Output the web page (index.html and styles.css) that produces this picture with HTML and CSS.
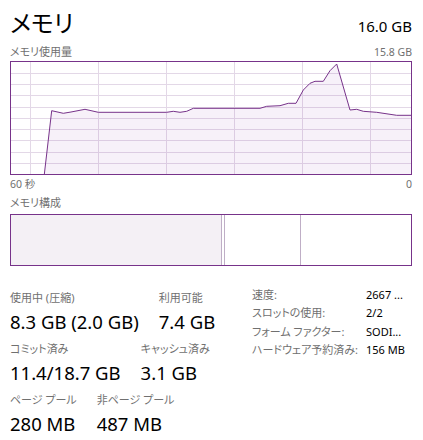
FILE: index.html
```html
<!DOCTYPE html>
<html lang="ja">
<head>
<meta charset="utf-8">
<link rel="stylesheet" href="styles.css">
</head>
<body>
<div class="page">
  <div class="header">
    <div class="title">メモリ</div>
    <div class="total">16.0 GB</div>
  </div>
  <div class="label-row">
    <span class="jp">メモリ使用量</span>
    <span class="small">15.8 GB</span>
  </div>
  <div class="graph">
    <svg width="400" height="112" viewBox="0 0 400 112">
      <g class="grid">
        <line x1="0" y1="11.5" x2="400" y2="11.5"/>
        <line x1="0" y1="22.5" x2="400" y2="22.5"/>
        <line x1="0" y1="33.5" x2="400" y2="33.5"/>
        <line x1="0" y1="45.5" x2="400" y2="45.5"/>
        <line x1="0" y1="56.5" x2="400" y2="56.5"/>
        <line x1="0" y1="67.5" x2="400" y2="67.5"/>
        <line x1="0" y1="78.5" x2="400" y2="78.5"/>
        <line x1="0" y1="90.5" x2="400" y2="90.5"/>
        <line x1="0" y1="101.5" x2="400" y2="101.5"/>
        <line x1="19.5" y1="0" x2="19.5" y2="112"/>
        <line x1="87.5" y1="0" x2="87.5" y2="112"/>
        <line x1="155.5" y1="0" x2="155.5" y2="112"/>
        <line x1="223.5" y1="0" x2="223.5" y2="112"/>
        <line x1="291.5" y1="0" x2="291.5" y2="112"/>
        <line x1="359.5" y1="0" x2="359.5" y2="112"/>
      </g>
      <path class="area" d="M33.3,112.5 L40.7,48.7 L52.3,51.3 L60,50 L74,47.3 L87.3,50.3 L155.7,50.3 L162.3,49.3 L169,50.3 L175.7,49.3 L182.3,46.3 L249,46.3 L255.7,44.3 L269,43.7 L277.3,41.3 L285,41.3 L292.3,28 L299,21.3 L304,19.3 L312.3,19.3 L319,8.7 L325.7,2 L339,48 L345.7,47.3 L352.3,49.3 L365.7,50.3 L385.7,53.3 L400,53.3 L400,112.5 Z"/>
      <path class="line" d="M33.3,112.5 L40.7,48.7 L52.3,51.3 L60,50 L74,47.3 L87.3,50.3 L155.7,50.3 L162.3,49.3 L169,50.3 L175.7,49.3 L182.3,46.3 L249,46.3 L255.7,44.3 L269,43.7 L277.3,41.3 L285,41.3 L292.3,28 L299,21.3 L304,19.3 L312.3,19.3 L319,8.7 L325.7,2 L339,48 L345.7,47.3 L352.3,49.3 L365.7,50.3 L385.7,53.3 L400,53.3"/>
    </svg>
  </div>
  <div class="axis-row">
    <span class="small">60 秒</span>
    <span class="small">0</span>
  </div>
  <div class="label-row comp-label">
    <span class="jp">メモリ構成</span>
  </div>
  <div class="comp">
    <div class="seg used"></div>
    <div class="seg modified"></div>
    <div class="seg standby"></div>
    <div class="seg free"></div>
  </div>
  <div class="stats">
    <div class="left">
      <div class="stat-row">
        <div class="stat">
          <div class="stat-label">使用中 (圧縮)</div>
          <div class="stat-value">8.3 GB (2.0 GB)</div>
        </div>
        <div class="stat">
          <div class="stat-label">利用可能</div>
          <div class="stat-value">7.4 GB</div>
        </div>
      </div>
      <div class="stat-row">
        <div class="stat">
          <div class="stat-label">コミット済み</div>
          <div class="stat-value">11.4/18.7 GB</div>
        </div>
        <div class="stat">
          <div class="stat-label">キャッシュ済み</div>
          <div class="stat-value">3.1 GB</div>
        </div>
      </div>
      <div class="stat-row">
        <div class="stat">
          <div class="stat-label">ページ プール</div>
          <div class="stat-value">280 MB</div>
        </div>
        <div class="stat">
          <div class="stat-label">非ページ プール</div>
          <div class="stat-value">487 MB</div>
        </div>
      </div>
    </div>
    <div class="right">
      <div class="k">速度:</div><div class="v">2667 ...</div>
      <div class="k">スロットの使用:</div><div class="v">2/2</div>
      <div class="k">フォーム ファクター:</div><div class="v">SODI...</div>
      <div class="k">ハードウェア予約済み:</div><div class="v">156 MB</div>
    </div>
  </div>
</div>
</body>
</html>
```

FILE: styles.css
```css
html, body {
  margin: 0;
  padding: 0;
  background: #ffffff;
}

body {
  font-family: "Noto Sans", "Noto Sans CJK JP", sans-serif;
  color: #000000;
  font-feature-settings: "palt";
}

.page {
  width: 402px;
  padding-left: 10px;
  padding-right: 11px;
}

.header {
  display: flex;
  justify-content: space-between;
  align-items: baseline;
  padding-top: 7px;
  height: 32px;
}

.title {
  font-size: 24px;
  line-height: 32px;
  color: #000;
}

.total {
  font-size: 15px;
  line-height: 32px;
  color: #000;
}

.label-row {
  display: flex;
  justify-content: space-between;
  align-items: baseline;
  margin-top: 6px;
  height: 14px;
  line-height: 14px;
  color: #707070;
}

.jp {
  font-size: 11px;
}

.small {
  font-size: 10.5px;
  color: #707070;
}

.graph {
  margin-top: 2px;
  width: 400px;
  height: 112px;
  border: 1px solid #77338a;
}

.graph svg {
  display: block;
}

.grid line {
  stroke: #e3d8e7;
  stroke-width: 1;
}

.area {
  fill: rgba(139, 40, 160, 0.065);
  stroke: none;
}

.line {
  fill: none;
  stroke: #77338a;
  stroke-width: 1;
  stroke-linejoin: round;
}

.axis-row {
  display: flex;
  justify-content: space-between;
  align-items: baseline;
  margin-top: 2px;
  height: 14px;
  line-height: 14px;
}

.comp-label {
  margin-top: 5px;
}

.comp {
  margin-top: 4px;
  width: 400px;
  height: 50px;
  border: 1px solid #77338a;
  display: flex;
}

.seg {
  height: 100%;
}

.used {
  width: 210px;
  background: #f4f0f5;
  border-right: 1px solid #bfaec6;
}

.modified {
  width: 2px;
  border-right: 1px solid #bfaec6;
}

.standby {
  width: 75px;
  border-right: 1px solid #bfaec6;
}

.free {
  flex: 1;
}

.stats {
  display: flex;
  margin-top: 20px;
}

.left {
  width: 242px;
  padding-top: 4px;
}

.stat-row {
  display: flex;
  gap: 20px;
  margin-bottom: 7px;
}

.stat-label {
  font-size: 11px;
  line-height: 16px;
  color: #707070;
  margin-bottom: 4px;
  white-space: nowrap;
}

.stat-value {
  font-size: 18.5px;
  line-height: 24px;
  color: #000;
  white-space: nowrap;
}

.right {
  display: grid;
  grid-template-columns: 114px auto;
  grid-auto-rows: 18.3px;
  align-items: center;
  font-size: 11px;
  line-height: 18px;
}

.k {
  color: #707070;
  white-space: nowrap;
}

.v {
  color: #000;
  white-space: nowrap;
}
```
